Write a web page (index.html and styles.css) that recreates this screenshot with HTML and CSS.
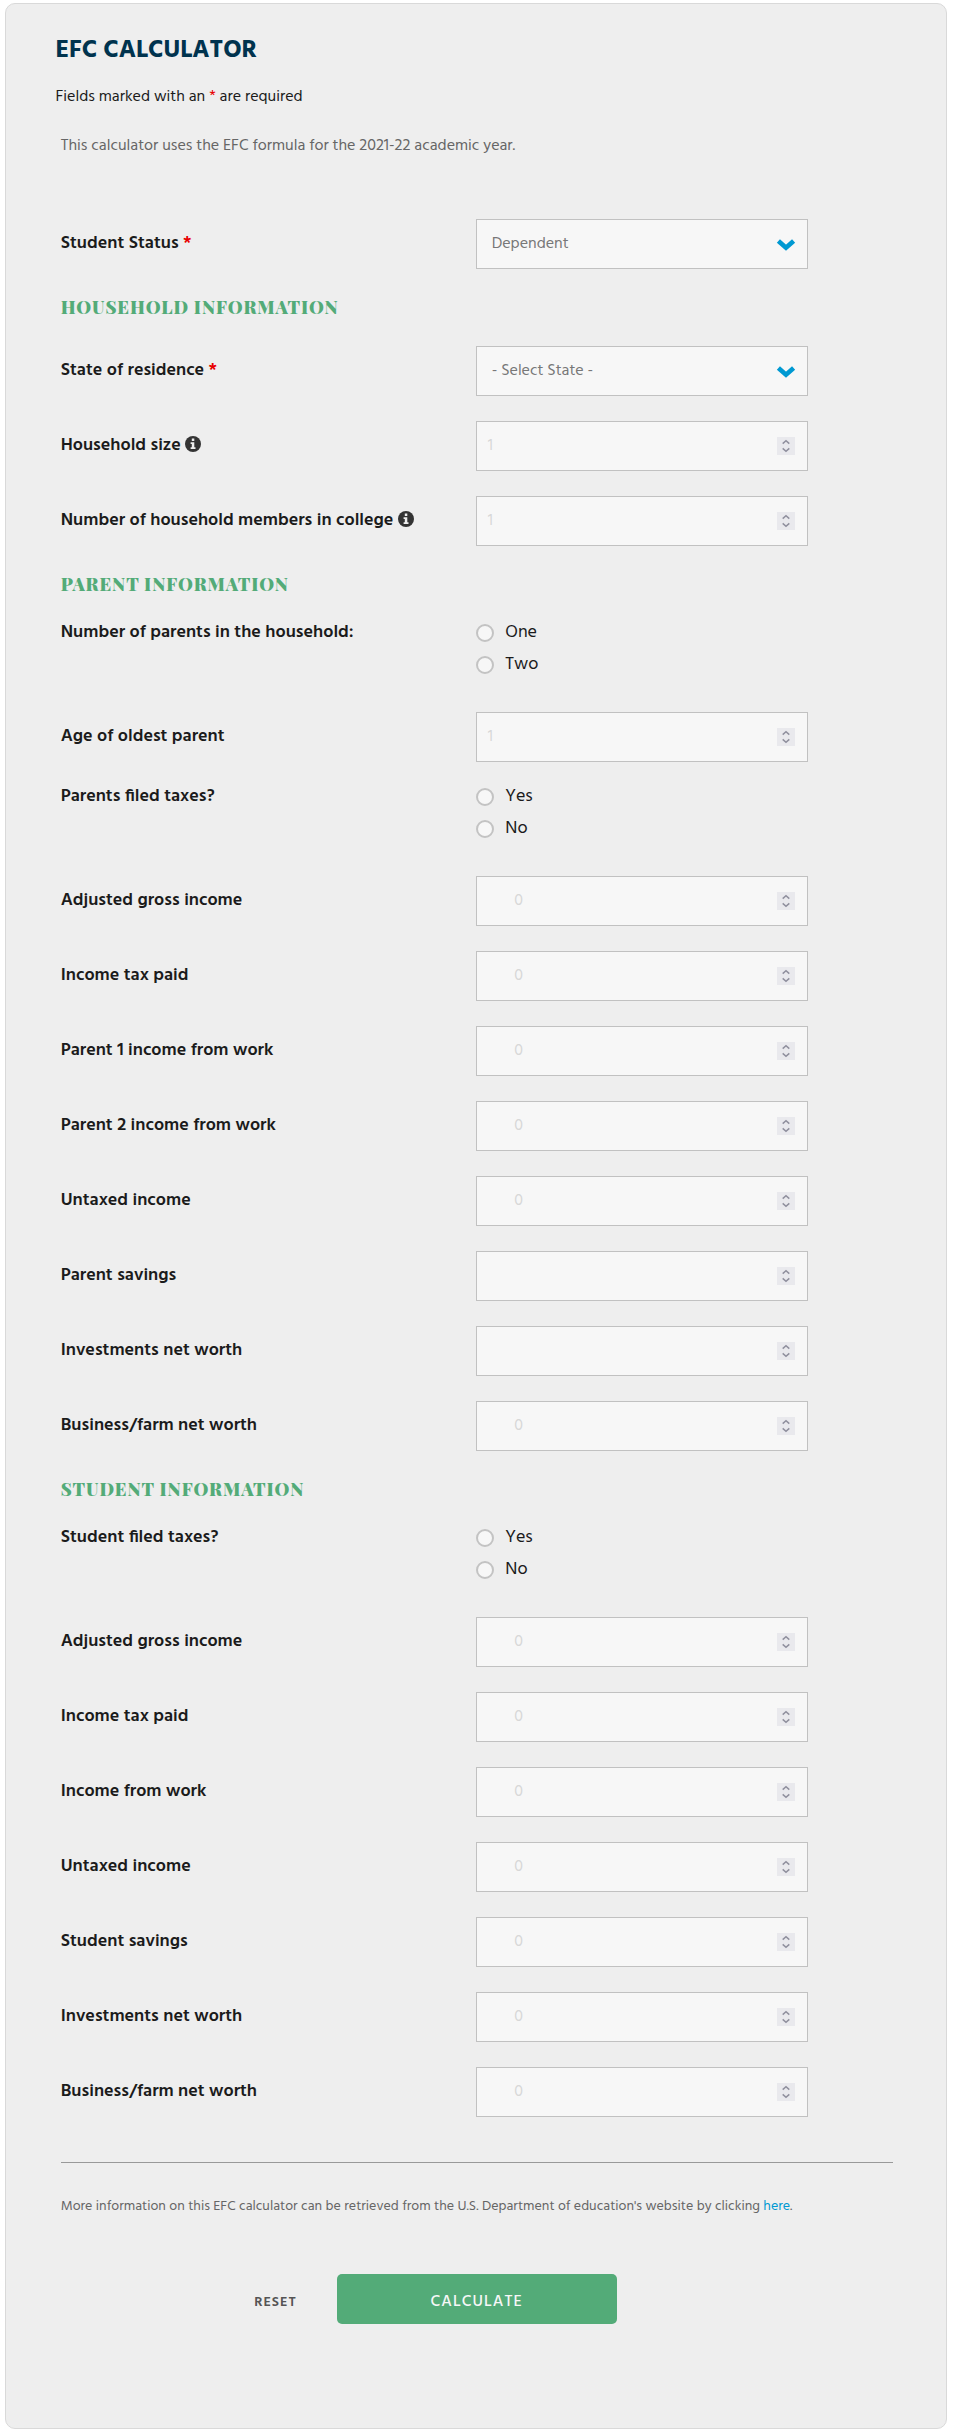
FILE: index.html
```
<!DOCTYPE html>
<html lang="en">
<head>
<meta charset="utf-8">
<title>EFC Calculator</title>
<link rel="stylesheet" href="styles.css">
</head>
<body>
<svg class="sprite" aria-hidden="true">
  <symbol id="chevron" viewBox="0 0 20 14"><path d="M2.4 3 L10 9.7 L17.6 3" fill="none" stroke="#0099d2" stroke-width="4.7" stroke-linecap="butt" stroke-linejoin="miter"/></symbol>
  <symbol id="spin" viewBox="0 0 18 18"><rect width="18" height="18" fill="#e9e9ed"/><path d="M5.7 6.6 L9 3.8 L12.3 6.6 M5.7 11.4 L9 14.2 L12.3 11.4" fill="none" stroke="#8f8f9d" stroke-width="1.5"/></symbol>
  <symbol id="info" viewBox="0 0 16 16"><circle cx="8" cy="8" r="8" fill="#333"/><path d="M6.8 2.5h2.5v2.4H6.8zM5.6 6.2h3.7v5h1.2v1.9H5.6v-1.9h1.2V8.1H5.6z" fill="#eee"/></symbol>
</svg>
<main class="card">
  <h1 class="title">EFC CALCULATOR</h1>
  <p class="required-note">Fields marked with an <span class="req">*</span> are required</p>
  <form class="form">
    <p class="intro">This calculator uses the EFC formula for the 2021-22 academic year.</p>

    <div class="row"><label class="label">Student Status <span class="req">*</span></label><div class="field select"><span>Dependent</span><svg class="chevron"><use href="#chevron"/></svg></div></div>

    <h2 class="section">HOUSEHOLD INFORMATION</h2>
    <div class="row"><label class="label">State of residence <span class="req">*</span></label><div class="field select"><span>- Select State -</span><svg class="chevron"><use href="#chevron"/></svg></div></div>
    <div class="row"><label class="label">Household size <svg class="info"><use href="#info"/></svg></label><div class="field number"><span>1</span><svg class="spin"><use href="#spin"/></svg></div></div>
    <div class="row"><label class="label">Number of household members in college <svg class="info"><use href="#info"/></svg></label><div class="field number"><span>1</span><svg class="spin"><use href="#spin"/></svg></div></div>

    <h2 class="section">PARENT INFORMATION</h2>
    <div class="row radios"><span class="label">Number of parents in the household:</span><div class="options"><label class="option"><i class="dot"></i>One</label><label class="option"><i class="dot"></i>Two</label></div></div>
    <div class="row"><label class="label">Age of oldest parent</label><div class="field number"><span>1</span><svg class="spin"><use href="#spin"/></svg></div></div>
    <div class="row radios"><span class="label">Parents filed taxes?</span><div class="options"><label class="option"><i class="dot"></i>Yes</label><label class="option"><i class="dot"></i>No</label></div></div>
    <div class="row"><label class="label">Adjusted gross income</label><div class="field money"><span>0</span><svg class="spin"><use href="#spin"/></svg></div></div>
    <div class="row"><label class="label">Income tax paid</label><div class="field money"><span>0</span><svg class="spin"><use href="#spin"/></svg></div></div>
    <div class="row"><label class="label">Parent 1 income from work</label><div class="field money"><span>0</span><svg class="spin"><use href="#spin"/></svg></div></div>
    <div class="row"><label class="label">Parent 2 income from work</label><div class="field money"><span>0</span><svg class="spin"><use href="#spin"/></svg></div></div>
    <div class="row"><label class="label">Untaxed income</label><div class="field money"><span>0</span><svg class="spin"><use href="#spin"/></svg></div></div>
    <div class="row"><label class="label">Parent savings</label><div class="field money"><span></span><svg class="spin"><use href="#spin"/></svg></div></div>
    <div class="row"><label class="label">Investments net worth</label><div class="field money"><span></span><svg class="spin"><use href="#spin"/></svg></div></div>
    <div class="row"><label class="label">Business/farm net worth</label><div class="field money"><span>0</span><svg class="spin"><use href="#spin"/></svg></div></div>

    <h2 class="section">STUDENT INFORMATION</h2>
    <div class="row radios"><span class="label">Student filed taxes?</span><div class="options"><label class="option"><i class="dot"></i>Yes</label><label class="option"><i class="dot"></i>No</label></div></div>
    <div class="row"><label class="label">Adjusted gross income</label><div class="field money"><span>0</span><svg class="spin"><use href="#spin"/></svg></div></div>
    <div class="row"><label class="label">Income tax paid</label><div class="field money"><span>0</span><svg class="spin"><use href="#spin"/></svg></div></div>
    <div class="row"><label class="label">Income from work</label><div class="field money"><span>0</span><svg class="spin"><use href="#spin"/></svg></div></div>
    <div class="row"><label class="label">Untaxed income</label><div class="field money"><span>0</span><svg class="spin"><use href="#spin"/></svg></div></div>
    <div class="row"><label class="label">Student savings</label><div class="field money"><span>0</span><svg class="spin"><use href="#spin"/></svg></div></div>
    <div class="row"><label class="label">Investments net worth</label><div class="field money"><span>0</span><svg class="spin"><use href="#spin"/></svg></div></div>
    <div class="row"><label class="label">Business/farm net worth</label><div class="field money"><span>0</span><svg class="spin"><use href="#spin"/></svg></div></div>

    <hr class="rule">
    <p class="more">More information on this EFC calculator can be retrieved from the U.S. Department of education's website by clicking <a class="link" href="#">here</a>.</p>
    <div class="actions"><button type="reset" class="reset">RESET</button><button type="button" class="calculate">CALCULATE</button></div>
  </form>
</main>
</body>
</html>
```

FILE: styles.css
```
* { box-sizing: border-box; }
body {
  margin: 0;
  background: #fff;
  color: #1b1b1b;
  font-family: Hind, "Noto Sans", sans-serif;
  font-size: 16px;
}
h1, h2, p { margin: 0; }
.sprite { display: none; }
.card {
  width: 942px;
  height: 2426px;
  margin: 3px 0 0 5px;
  padding: 31px 49px 0 49.5px;
  background: #eee;
  border: 1px solid #d9d9d9;
  border-radius: 10px;
}
.title {
  font-size: 25px;
  line-height: 32px;
  font-weight: 700;
  color: #00334e;
}
.required-note { margin-top: 18px; line-height: 24px; }
.req { color: #e80000; }
.form { width: 837.2px; padding-left: 5.2px; }
.intro { margin: 25px 0 61px; line-height: 24px; color: #666; }
.row {
  display: grid;
  grid-template-columns: 415.6px 332px;
  height: 50px;
  margin-bottom: 25px;
}
.label { font-size: 18px; font-weight: 600; line-height: 50px; white-space: nowrap; }
.info { width: 16px; height: 16px; vertical-align: -2px; }
.field {
  display: flex;
  align-items: center;
  justify-content: space-between;
  height: 50px;
  padding: 0 12px 0 10.5px;
  background: #f7f7f7;
  border: 1px solid #c1c1c1;
  line-height: 48px;
  color: #d8d8d8;
}
.select { padding: 0 11px 0 14.4px; color: #787878; }
.money { padding-left: 37px; }
.chevron { width: 20px; height: 14px; margin-top: 2px; }
.spin { width: 18px; height: 18px; }
.section {
  height: 52px;
  font-family: "Playfair Display", "Liberation Serif", serif;
  font-size: 18px;
  font-weight: 900;
  line-height: 26px;
  letter-spacing: 0.9px;
  color: #53ab78;
}
.radios { height: 64px; }
.radios .label { line-height: 20px; }
.option {
  display: flex;
  align-items: flex-start;
  gap: 11px;
  height: 32px;
  font-size: 18px;
  line-height: 20px;
}
.dot {
  width: 18px;
  height: 18px;
  margin-top: 1px;
  background: #f7f7f7;
  border: 2px solid #c3c3c3;
  border-radius: 50%;
}
.rule { height: 1px; margin: 45px 0 32px; border: 0; background: #999; }
.more { font-size: 14px; line-height: 24px; color: #666; white-space: nowrap; }
.link { color: #0099d2; text-decoration: none; }
.actions { display: flex; align-items: baseline; padding: 55px 0 0 193.5px; }
button { font-family: inherit; border: 0; cursor: pointer; }
.reset {
  width: 82.5px;
  padding: 0;
  background: none;
  font-size: 14px;
  font-weight: 600;
  letter-spacing: 1px;
  text-align: left;
  color: #555;
}
.calculate {
  width: 280px;
  height: 50px;
  padding: 6px 0 0;
  background: #53ab78;
  border-radius: 5px;
  font-size: 16px;
  font-weight: 500;
  letter-spacing: 1.1px;
  color: #f7f7f7;
}
```
